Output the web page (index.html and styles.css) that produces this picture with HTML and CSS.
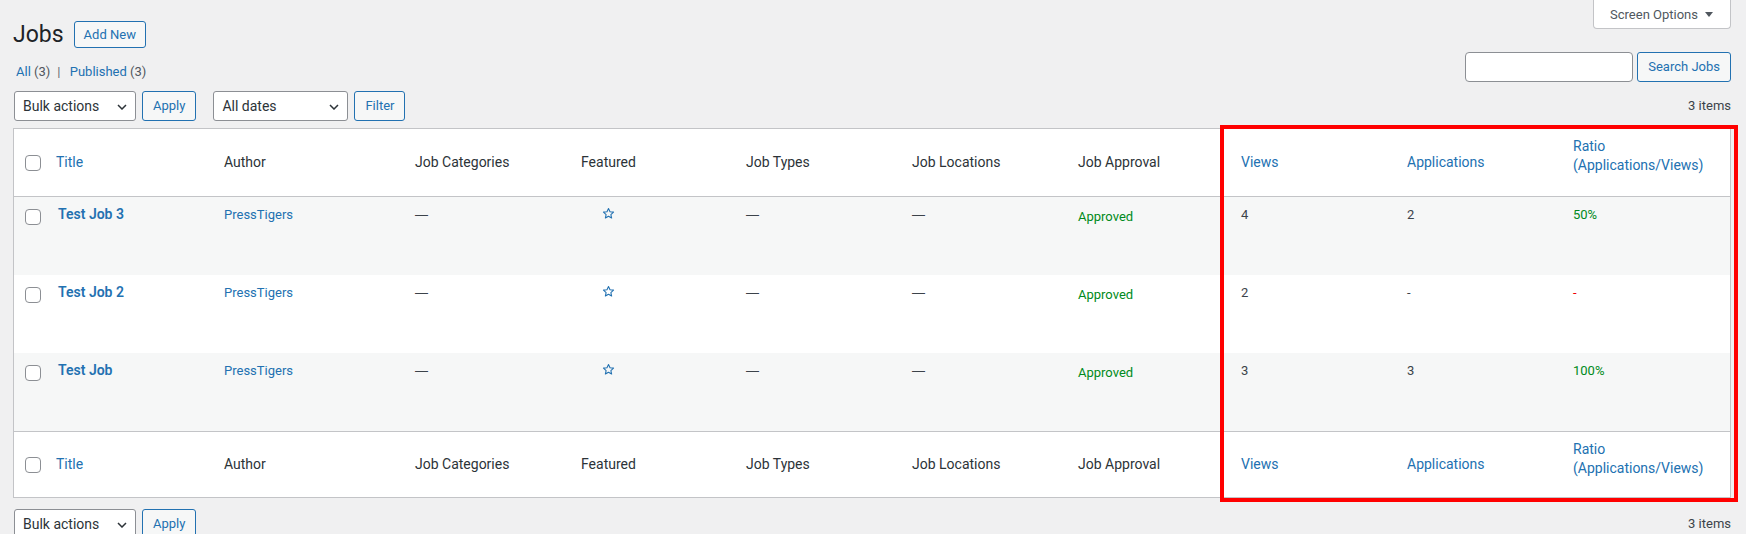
FILE: index.html
```html
<!DOCTYPE html>
<html lang="en">
<head>
  <meta charset="UTF-8">
  <title>Jobs</title>
  <link rel="stylesheet" href="styles.css">
</head>
<body>

<div class="wrap">

  <div class="page-head">
    <div class="title-group">
      <h1>Jobs</h1>
      <a class="page-title-action" href="#">Add New</a>
    </div>
    <button class="screen-options">Screen Options <span class="caret"></span></button>
  </div>

  <div class="list-head">
    <ul class="subsubsub">
      <li><a href="#">All <span class="count">(3)</span></a><span class="sep">|</span></li>
      <li><a href="#">Published <span class="count">(3)</span></a></li>
    </ul>
    <div class="search-box">
      <input type="search" id="searchInput">
      <button class="button">Search Jobs</button>
    </div>
  </div>

  <div class="tablenav">
    <div class="actions">
      <div class="select-wrap bulk">
        <select><option>Bulk actions</option><option>Edit</option><option>Move to Trash</option></select>
        <svg width="10" height="6" viewBox="0 0 10 6"><path d="M1 1l4 4 4-4" fill="none" stroke="#2c3338" stroke-width="1.5"/></svg>
      </div>
      <button class="button">Apply</button>
    </div>
    <div class="actions">
      <div class="select-wrap dates">
        <select><option>All dates</option></select>
        <svg width="10" height="6" viewBox="0 0 10 6"><path d="M1 1l4 4 4-4" fill="none" stroke="#2c3338" stroke-width="1.5"/></svg>
      </div>
      <button class="button">Filter</button>
    </div>
    <div class="displaying-num">3 items</div>
  </div>

  <div class="table-wrap">
    <table class="widefat">
      <colgroup>
        <col style="width:32px"><col style="width:168px"><col style="width:191px"><col style="width:166px">
        <col style="width:165px"><col style="width:166px"><col style="width:166px"><col style="width:163px">
        <col style="width:166px"><col style="width:166px"><col style="width:167px">
      </colgroup>
      <thead>
        <tr>
          <th class="check-column"><input type="checkbox"></th>
          <th><a href="#">Title</a></th>
          <th>Author</th>
          <th>Job Categories</th>
          <th>Featured</th>
          <th>Job Types</th>
          <th>Job Locations</th>
          <th>Job Approval</th>
          <th><a href="#">Views</a></th>
          <th><a href="#">Applications</a></th>
          <th class="col-ratio"><a href="#">Ratio (Applications/Views)</a></th>
        </tr>
      </thead>
      <tbody>
        <tr>
          <td class="check-column"><input type="checkbox"></td>
          <td class="title"><a class="row-title" href="#">Test Job 3</a></td>
          <td><a href="#">PressTigers</a></td>
          <td class="na">—</td>
          <td><span class="star"><svg width="13" height="13" viewBox="0 0 24 24"><path d="M12 2.8l2.8 6 6.5.7-4.9 4.4 1.4 6.5L12 17.1l-5.8 3.3 1.4-6.5-4.9-4.4 6.5-.7z" fill="none" stroke="#2271b1" stroke-width="2" stroke-linejoin="round"/></svg></span></td>
          <td class="na">—</td>
          <td class="na">—</td>
          <td class="approval">Approved</td>
          <td>4</td>
          <td>2</td>
          <td class="good">50%</td>
        </tr>
        <tr>
          <td class="check-column"><input type="checkbox"></td>
          <td class="title"><a class="row-title" href="#">Test Job 2</a></td>
          <td><a href="#">PressTigers</a></td>
          <td class="na">—</td>
          <td><span class="star"><svg width="13" height="13" viewBox="0 0 24 24"><path d="M12 2.8l2.8 6 6.5.7-4.9 4.4 1.4 6.5L12 17.1l-5.8 3.3 1.4-6.5-4.9-4.4 6.5-.7z" fill="none" stroke="#2271b1" stroke-width="2" stroke-linejoin="round"/></svg></span></td>
          <td class="na">—</td>
          <td class="na">—</td>
          <td class="approval">Approved</td>
          <td>2</td>
          <td>-</td>
          <td class="bad">-</td>
        </tr>
        <tr>
          <td class="check-column"><input type="checkbox"></td>
          <td class="title"><a class="row-title" href="#">Test Job</a></td>
          <td><a href="#">PressTigers</a></td>
          <td class="na">—</td>
          <td><span class="star"><svg width="13" height="13" viewBox="0 0 24 24"><path d="M12 2.8l2.8 6 6.5.7-4.9 4.4 1.4 6.5L12 17.1l-5.8 3.3 1.4-6.5-4.9-4.4 6.5-.7z" fill="none" stroke="#2271b1" stroke-width="2" stroke-linejoin="round"/></svg></span></td>
          <td class="na">—</td>
          <td class="na">—</td>
          <td class="approval">Approved</td>
          <td>3</td>
          <td>3</td>
          <td class="good">100%</td>
        </tr>
      </tbody>
      <tfoot>
        <tr>
          <th class="check-column"><input type="checkbox"></th>
          <th><a href="#">Title</a></th>
          <th>Author</th>
          <th>Job Categories</th>
          <th>Featured</th>
          <th>Job Types</th>
          <th>Job Locations</th>
          <th>Job Approval</th>
          <th><a href="#">Views</a></th>
          <th><a href="#">Applications</a></th>
          <th class="col-ratio"><a href="#">Ratio (Applications/Views)</a></th>
        </tr>
      </tfoot>
    </table>
    <div class="highlight"></div>
  </div>

  <div class="tablenav bottom">
    <div class="actions">
      <div class="select-wrap bulk">
        <select><option>Bulk actions</option><option>Edit</option><option>Move to Trash</option></select>
        <svg width="10" height="6" viewBox="0 0 10 6"><path d="M1 1l4 4 4-4" fill="none" stroke="#2c3338" stroke-width="1.5"/></svg>
      </div>
      <button class="button">Apply</button>
    </div>
    <div class="displaying-num">3 items</div>
  </div>

</div>

</body>
</html>
```

FILE: styles.css
```css
body {
  margin: 0;
  background-color: #f0f0f1;
  color: #3c434a;
  font-family: -apple-system, BlinkMacSystemFont, "Segoe UI", Roboto, sans-serif;
  font-size: 13px;
  line-height: 1.4em;
}

a {
  color: #2271b1;
  text-decoration: none;
}

.wrap {
  padding: 0 15px 0 13px;
}

/* title row */

.page-head {
  display: flex;
  justify-content: space-between;
  align-items: flex-start;
  height: 48px;
}

.title-group {
  display: flex;
  align-items: center;
  gap: 10px;
  margin-top: 21px;
}

h1 {
  margin: 0;
  font-size: 23px;
  font-weight: 400;
  line-height: 27px;
  color: #1d2327;
}

.page-title-action {
  border: 1px solid #2271b1;
  border-radius: 3px;
  background-color: #f6f7f7;
  padding: 4px 9px;
  font-size: 13px;
  font-weight: 400;
  line-height: 17px;
}

.screen-options {
  display: flex;
  align-items: center;
  gap: 7px;
  height: 29px;
  padding: 0 17px 0 16px;
  background-color: #fff;
  border: 1px solid #c3c4c7;
  border-top: none;
  border-radius: 0 0 4px 4px;
  color: #50575e;
  font-family: inherit;
  font-size: 13px;
}

.caret {
  width: 0;
  height: 0;
  border-left: 4px solid transparent;
  border-right: 4px solid transparent;
  border-top: 5px solid #50575e;
}

/* views + search */

.list-head {
  display: flex;
  justify-content: space-between;
  align-items: flex-end;
  margin-top: 4px;
}

.subsubsub {
  list-style: none;
  margin: 0;
  padding: 0 0 0 3px;
  color: #646970;
  font-size: 13px;
  line-height: 20px;
}

.subsubsub li {
  display: inline;
}

.subsubsub .sep {
  margin: 0 6px 0 7px;
}

.subsubsub .count {
  color: #50575e;
}

.search-box {
  display: flex;
  gap: 4px;
}

.search-box input {
  width: 168px;
  height: 30px;
  box-sizing: border-box;
  border: 1px solid #8c8f94;
  border-radius: 4px;
  padding: 0 8px;
  background-color: #fff;
}

.button {
  height: 30px;
  box-sizing: border-box;
  padding: 0 10px;
  border: 1px solid #2271b1;
  border-radius: 3px;
  background-color: #f6f7f7;
  color: #2271b1;
  font-family: inherit;
  font-size: 13px;
  line-height: 28px;
  cursor: pointer;
}

/* bulk actions / filters */

.tablenav {
  display: flex;
  align-items: center;
  gap: 17px;
  height: 30px;
  margin-top: 9px;
  padding-left: 1px;
}

.tablenav.bottom {
  margin-top: 11px;
}

.tablenav .actions {
  display: flex;
  gap: 6px;
}

.select-wrap {
  position: relative;
}

.select-wrap.bulk {
  width: 122px;
}

.select-wrap.dates {
  width: 135px;
}

.select-wrap select {
  appearance: none;
  width: 100%;
  height: 30px;
  padding: 0 24px 0 8px;
  border: 1px solid #8c8f94;
  border-radius: 3px;
  background-color: #fff;
  color: #2c3338;
  font-family: inherit;
  font-size: 14px;
}

.select-wrap svg {
  position: absolute;
  right: 9px;
  top: 13px;
  pointer-events: none;
}

.displaying-num {
  margin-left: auto;
  color: #3c434a;
  font-size: 13px;
}

/* list table */

.table-wrap {
  position: relative;
  margin-top: 7px;
}

.widefat {
  width: 100%;
  table-layout: fixed;
  border-spacing: 0;
  background-color: #fff;
  border: 1px solid #c3c4c7;
}

.widefat th,
.widefat td {
  padding: 8px 10px;
  text-align: left;
}

.widefat th {
  font-size: 14px;
  font-weight: 400;
  line-height: 19px;
  color: #2c3338;
  vertical-align: middle;
}

.widefat thead th {
  border-bottom: 1px solid #c3c4c7;
}

.widefat thead th.col-ratio {
  padding-bottom: 21px;
}

.widefat tfoot th {
  border-top: 1px solid #c3c4c7;
}

.widefat tfoot th.col-ratio {
  padding-bottom: 19px;
}

.widefat td {
  font-size: 13px;
  line-height: 19px;
  vertical-align: top;
}

.widefat tbody tr {
  height: 78px;
}

.widefat tbody tr:nth-child(odd) {
  background-color: #f6f7f7;
}

.widefat .check-column {
  padding: 0 0 0 11px;
}

.widefat tbody .check-column {
  padding-top: 12px;
}

.check-column input {
  appearance: none;
  display: block;
  width: 16px;
  height: 16px;
  margin: 0;
  border: 1px solid #8c8f94;
  border-radius: 4px;
  background-color: #fff;
}

.widefat td.title {
  padding-left: 12px;
}

.row-title {
  font-size: 14px;
  font-weight: 600;
}

.widefat td.na {
  font-family: "Liberation Sans", sans-serif;
}

.star {
  display: inline-block;
  margin-left: 21px;
  vertical-align: -1px;
}

.star svg {
  display: block;
}

.widefat td.approval {
  padding-top: 10px;
  color: #008a20;
}

.good {
  color: #008a20;
}

.bad {
  color: #e00;
}

/* annotation box */

.highlight {
  position: absolute;
  left: 1207px;
  top: -3px;
  width: 518px;
  height: 377px;
  box-sizing: border-box;
  border: 4px solid #f00;
  pointer-events: none;
}
```
